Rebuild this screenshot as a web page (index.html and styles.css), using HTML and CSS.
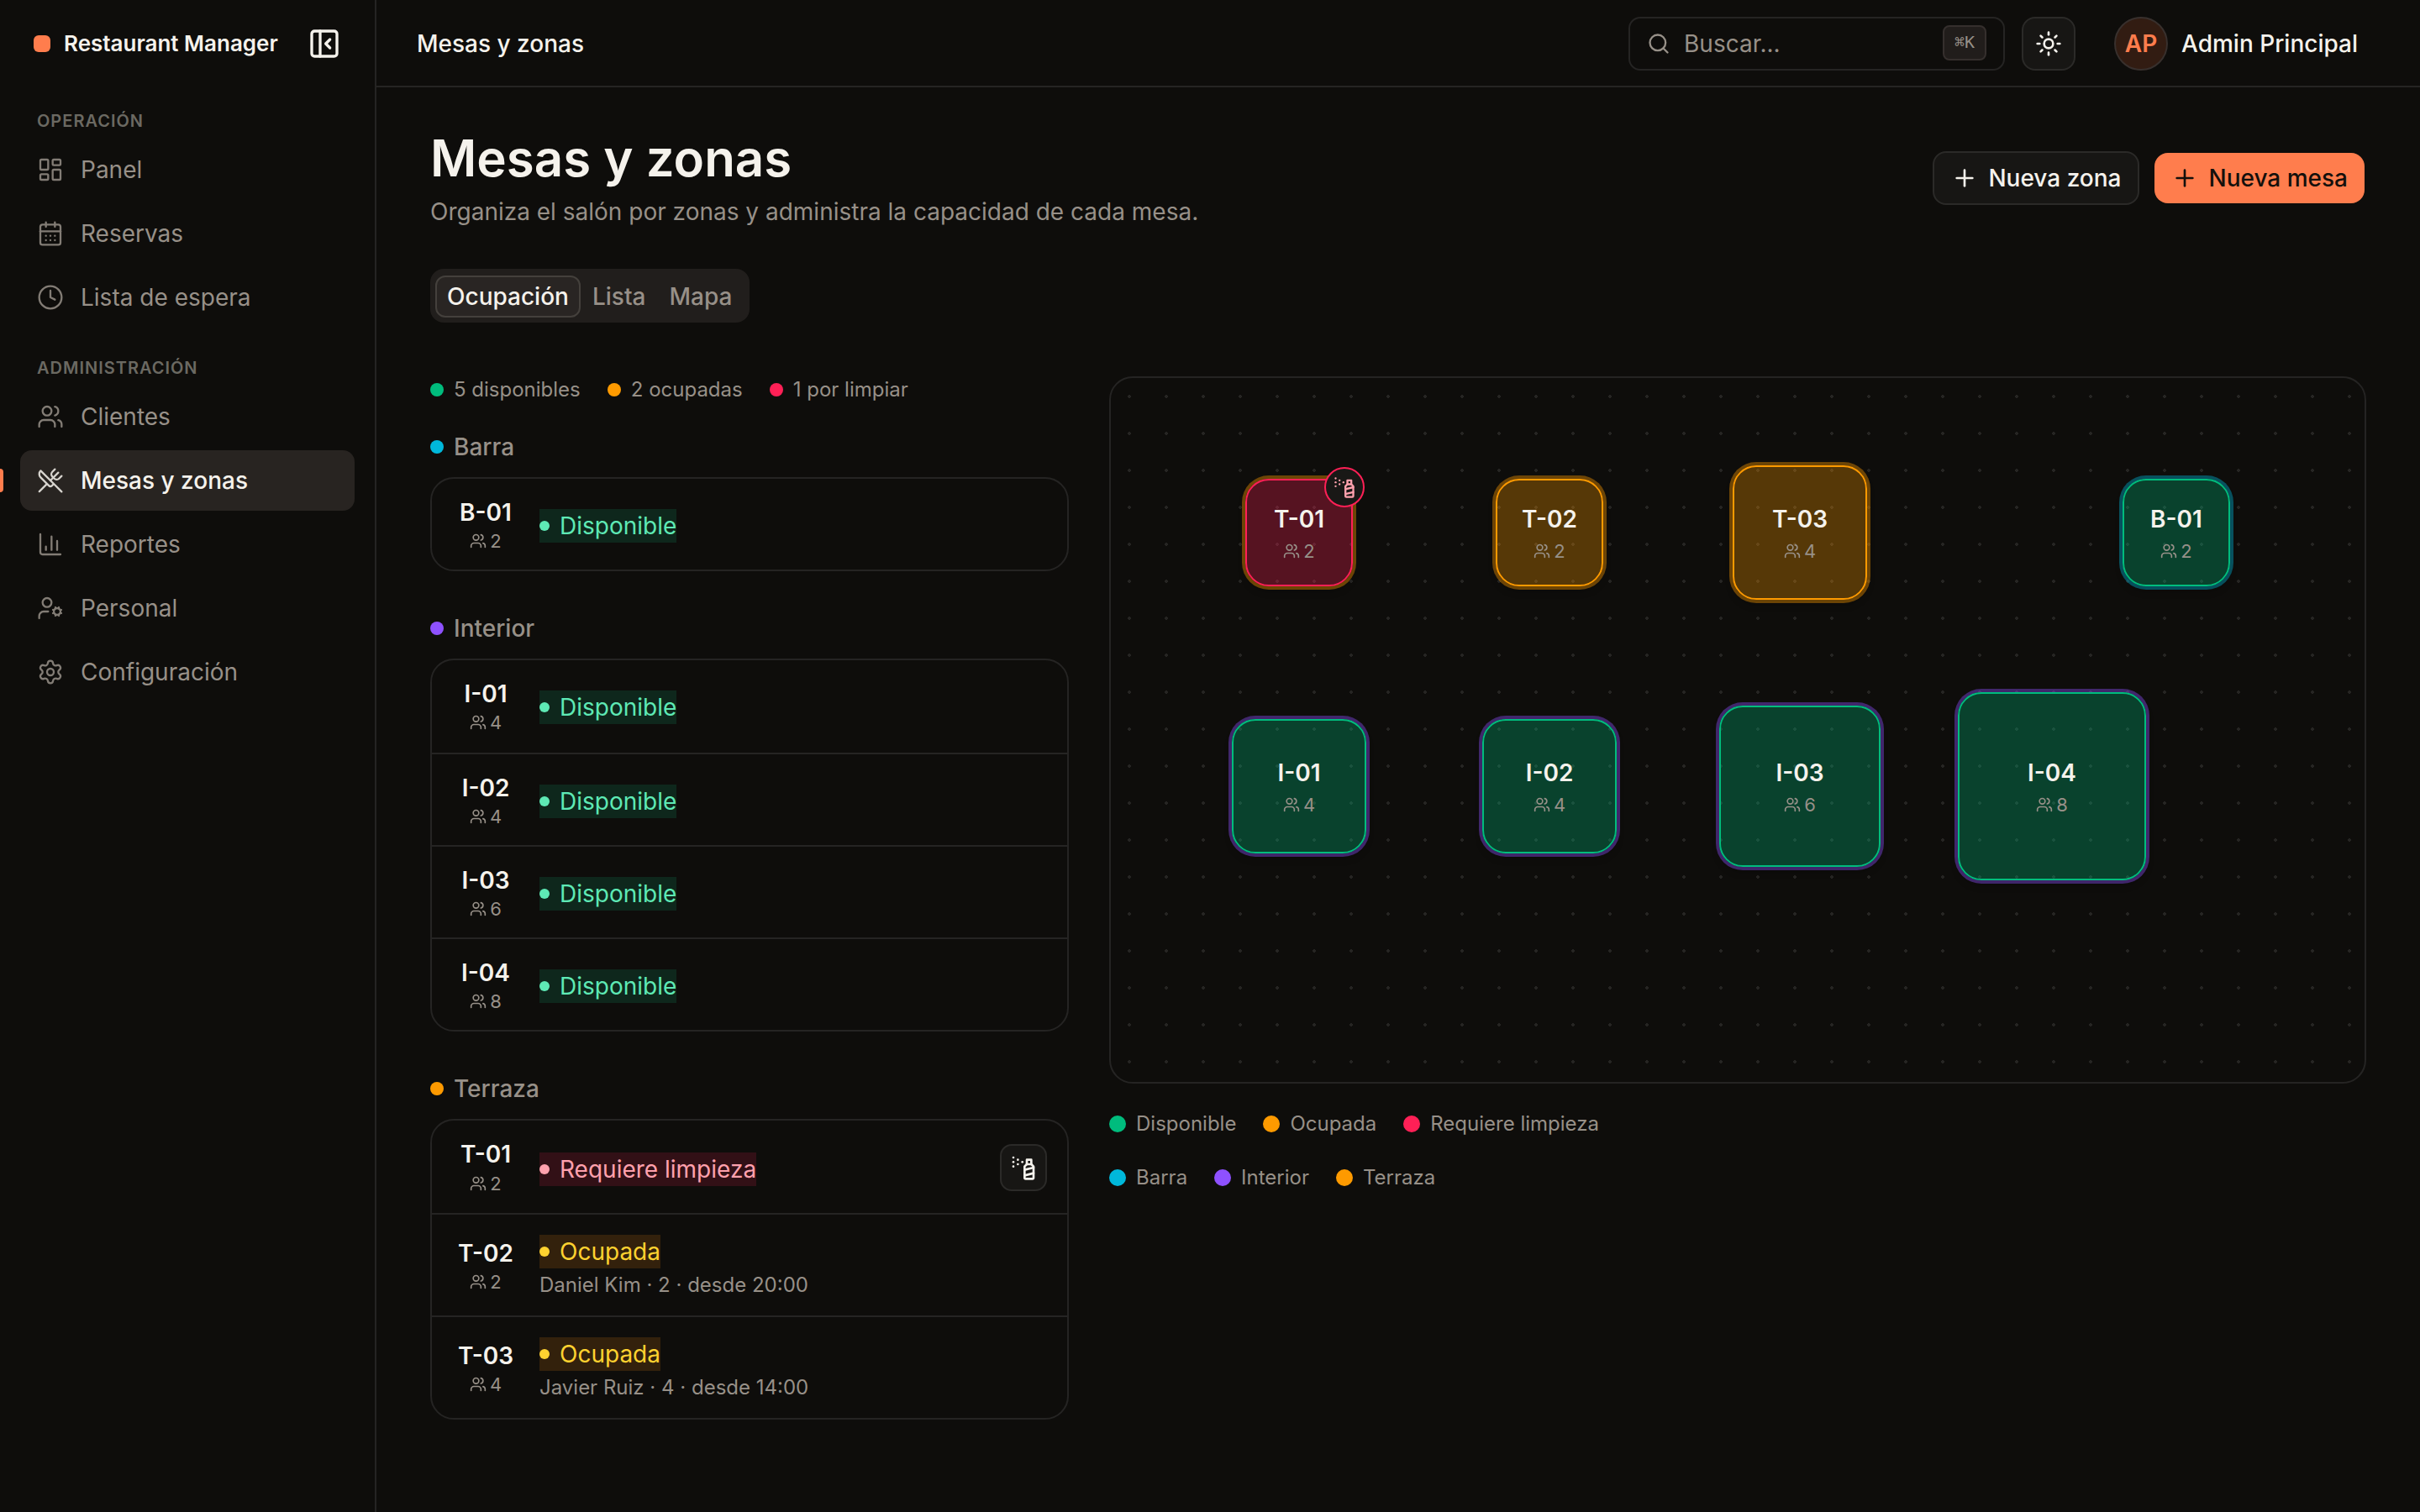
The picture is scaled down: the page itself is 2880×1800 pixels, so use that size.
FILE: index.html
```html
<!DOCTYPE html>
<html lang="es">
<head>
  <meta charset="UTF-8">
  <title>Mesas y zonas - Restaurant Manager</title>
  <link rel="stylesheet" href="styles.css">
</head>
<body>
  <!-- Iconos -->
  <svg class="sprite" aria-hidden="true">
    <symbol id="i-collapse" viewBox="0 0 24 24"><rect width="18" height="18" x="3" y="3" rx="2"/><path d="M9 3v18"/><path d="m16 15-3-3 3-3"/></symbol>
    <symbol id="i-panel" viewBox="0 0 24 24"><rect width="7" height="9" x="3" y="3" rx="1"/><rect width="7" height="5" x="14" y="3" rx="1"/><rect width="7" height="9" x="14" y="12" rx="1"/><rect width="7" height="5" x="3" y="16" rx="1"/></symbol>
    <symbol id="i-calendar" viewBox="0 0 24 24"><path d="M8 2v4"/><path d="M16 2v4"/><rect width="18" height="18" x="3" y="4" rx="2"/><path d="M3 10h18"/><path d="M8 14h.01"/><path d="M12 14h.01"/><path d="M16 14h.01"/><path d="M8 18h.01"/><path d="M12 18h.01"/><path d="M16 18h.01"/></symbol>
    <symbol id="i-clock" viewBox="0 0 24 24"><circle cx="12" cy="12" r="10"/><path d="M12 6v6l4 2"/></symbol>
    <symbol id="i-users" viewBox="0 0 24 24"><path d="M16 21v-2a4 4 0 0 0-4-4H6a4 4 0 0 0-4 4v2"/><circle cx="9" cy="7" r="4"/><path d="M22 21v-2a4 4 0 0 0-3-3.87"/><path d="M16 3.13a4 4 0 0 1 0 7.75"/></symbol>
    <symbol id="i-utensils" viewBox="0 0 24 24"><path d="m16 2-2.3 2.3a3 3 0 0 0 0 4.2l1.8 1.8a3 3 0 0 0 4.2 0L22 8"/><path d="M15 15 3.3 3.3a4.2 4.2 0 0 0 0 6l7.3 7.3c.7.7 2 .7 2.8 0L15 15Zm0 0 7 7"/><path d="m2.1 21.8 6.4-6.3"/><path d="m19 5-7 7"/></symbol>
    <symbol id="i-chart" viewBox="0 0 24 24"><path d="M3 3v16a2 2 0 0 0 2 2h16"/><path d="M13 17V5"/><path d="M18 17V9"/><path d="M8 17v-3"/></symbol>
    <symbol id="i-user-cog" viewBox="0 0 24 24"><path d="M10 15H6a4 4 0 0 0-4 4v2"/><circle cx="9" cy="7" r="4"/><circle cx="18" cy="15" r="3"/><path d="m14.305 16.53.923-.382"/><path d="m15.228 13.852-.923-.383"/><path d="m16.852 12.228-.383-.923"/><path d="m16.852 17.772-.383.924"/><path d="m19.148 12.228.383-.923"/><path d="m19.53 18.696-.382-.924"/><path d="m20.772 13.852.924-.383"/><path d="m20.772 16.148.924.383"/></symbol>
    <symbol id="i-gear" viewBox="0 0 24 24"><path d="M9.671 4.136a2.34 2.34 0 0 1 4.659 0 2.34 2.34 0 0 0 3.319 1.915 2.34 2.34 0 0 1 2.33 4.033 2.34 2.34 0 0 0 0 3.831 2.34 2.34 0 0 1-2.33 4.033 2.34 2.34 0 0 0-3.319 1.915 2.34 2.34 0 0 1-4.659 0 2.34 2.34 0 0 0-3.32-1.915 2.34 2.34 0 0 1-2.33-4.033 2.34 2.34 0 0 0 0-3.831A2.34 2.34 0 0 1 6.35 6.051a2.34 2.34 0 0 0 3.319-1.915"/><circle cx="12" cy="12" r="3"/></symbol>
    <symbol id="i-search" viewBox="0 0 24 24"><circle cx="11" cy="11" r="8"/><path d="m21 21-4.3-4.3"/></symbol>
    <symbol id="i-sun" viewBox="0 0 24 24"><circle cx="12" cy="12" r="4"/><path d="M12 2v2"/><path d="M12 20v2"/><path d="m4.93 4.93 1.41 1.41"/><path d="m17.66 17.66 1.41 1.41"/><path d="M2 12h2"/><path d="M20 12h2"/><path d="m6.34 17.66-1.41 1.41"/><path d="m19.07 4.93-1.41 1.41"/></symbol>
    <symbol id="i-plus" viewBox="0 0 24 24"><path d="M5 12h14"/><path d="M12 5v14"/></symbol>
    <symbol id="i-spray" viewBox="0 0 24 24"><path d="M3 3h.01"/><path d="M7 5h.01"/><path d="M11 7h.01"/><path d="M3 7h.01"/><path d="M7 9h.01"/><path d="M3 11h.01"/><rect width="4" height="4" x="15" y="5"/><path d="m19 9 2 2v10c0 .6-.4 1-1 1h-6c-.6 0-1-.4-1-1V11l2-2"/><path d="m13 14 8-2"/><path d="m13 19 8-2"/></symbol>
  </svg>

  <div class="app">
    <aside class="sidebar">
      <div class="brand">
        <span class="brand-mark"></span>
        <span class="brand-name">Restaurant Manager</span>
        <svg class="icon icon-lg"><use href="#i-collapse"/></svg>
      </div>
      <nav class="nav">
        <div class="nav-title">OPERACIÓN</div>
        <a class="nav-item"><svg class="icon"><use href="#i-panel"/></svg>Panel</a>
        <a class="nav-item"><svg class="icon"><use href="#i-calendar"/></svg>Reservas</a>
        <a class="nav-item"><svg class="icon"><use href="#i-clock"/></svg>Lista de espera</a>
      </nav>
      <nav class="nav">
        <div class="nav-title">ADMINISTRACIÓN</div>
        <a class="nav-item"><svg class="icon"><use href="#i-users"/></svg>Clientes</a>
        <a class="nav-item active"><svg class="icon"><use href="#i-utensils"/></svg>Mesas y zonas</a>
        <a class="nav-item"><svg class="icon"><use href="#i-chart"/></svg>Reportes</a>
        <a class="nav-item"><svg class="icon"><use href="#i-user-cog"/></svg>Personal</a>
        <a class="nav-item"><svg class="icon"><use href="#i-gear"/></svg>Configuración</a>
      </nav>
    </aside>

    <div class="main">
      <header class="topbar">
        <span class="topbar-title">Mesas y zonas</span>
        <div class="search">
          <svg class="icon icon-search"><use href="#i-search"/></svg>
          <span class="search-text">Buscar...</span>
          <kbd>⌘K</kbd>
        </div>
        <button class="theme-btn"><svg class="icon"><use href="#i-sun"/></svg></button>
        <div class="user">
          <span class="avatar">AP</span>
          <span class="user-name">Admin Principal</span>
        </div>
      </header>

      <main class="content">
        <div class="page-head">
          <div>
            <h1>Mesas y zonas</h1>
            <p class="subtitle">Organiza el salón por zonas y administra la capacidad de cada mesa.</p>
          </div>
          <div class="actions">
            <button class="btn btn-outline"><svg class="icon"><use href="#i-plus"/></svg>Nueva zona</button>
            <button class="btn btn-primary"><svg class="icon"><use href="#i-plus"/></svg>Nueva mesa</button>
          </div>
        </div>

        <div class="tabs">
          <button class="tab active">Ocupación</button>
          <button class="tab">Lista</button>
          <button class="tab">Mapa</button>
        </div>

        <div class="columns">
          <div class="list-col">
            <div class="stats">
              <span class="key"><i class="dot emerald"></i>5 disponibles</span>
              <span class="key"><i class="dot amber"></i>2 ocupadas</span>
              <span class="key"><i class="dot rose"></i>1 por limpiar</span>
            </div>

            <section class="zone">
              <h2><i class="dot cyan"></i>Barra</h2>
              <div class="card">
                <div class="row">
                  <div class="code"><b>B-01</b><small><svg class="icon"><use href="#i-users"/></svg>2</small></div>
                  <div class="info"><span class="status free">Disponible</span></div>
                </div>
              </div>
            </section>

            <section class="zone">
              <h2><i class="dot violet"></i>Interior</h2>
              <div class="card">
                <div class="row">
                  <div class="code"><b>I-01</b><small><svg class="icon"><use href="#i-users"/></svg>4</small></div>
                  <div class="info"><span class="status free">Disponible</span></div>
                </div>
                <div class="row">
                  <div class="code"><b>I-02</b><small><svg class="icon"><use href="#i-users"/></svg>4</small></div>
                  <div class="info"><span class="status free">Disponible</span></div>
                </div>
                <div class="row">
                  <div class="code"><b>I-03</b><small><svg class="icon"><use href="#i-users"/></svg>6</small></div>
                  <div class="info"><span class="status free">Disponible</span></div>
                </div>
                <div class="row">
                  <div class="code"><b>I-04</b><small><svg class="icon"><use href="#i-users"/></svg>8</small></div>
                  <div class="info"><span class="status free">Disponible</span></div>
                </div>
              </div>
            </section>

            <section class="zone">
              <h2><i class="dot amber"></i>Terraza</h2>
              <div class="card">
                <div class="row row-action">
                  <div class="code"><b>T-01</b><small><svg class="icon"><use href="#i-users"/></svg>2</small></div>
                  <div class="info"><span class="status dirty">Requiere limpieza</span></div>
                  <button class="clean-btn"><svg class="icon"><use href="#i-spray"/></svg></button>
                </div>
                <div class="row">
                  <div class="code"><b>T-02</b><small><svg class="icon"><use href="#i-users"/></svg>2</small></div>
                  <div class="info"><span class="status busy">Ocupada</span><span class="guest">Daniel Kim · 2 · desde 20:00</span></div>
                </div>
                <div class="row">
                  <div class="code"><b>T-03</b><small><svg class="icon"><use href="#i-users"/></svg>4</small></div>
                  <div class="info"><span class="status busy">Ocupada</span><span class="guest">Javier Ruiz · 4 · desde 14:00</span></div>
                </div>
              </div>
            </section>
          </div>

          <div class="map-col">
            <div class="floor">
              <div class="table size-2 dirty zone-terraza" style="left: 224px; top: 184px">
                <b>T-01</b><small><svg class="icon"><use href="#i-users"/></svg>2</small>
                <span class="badge"><svg class="icon"><use href="#i-spray"/></svg></span>
              </div>
              <div class="table size-2 busy zone-terraza" style="left: 522px; top: 184px"><b>T-02</b><small><svg class="icon"><use href="#i-users"/></svg>2</small></div>
              <div class="table size-4 busy zone-terraza" style="left: 820px; top: 184px"><b>T-03</b><small><svg class="icon"><use href="#i-users"/></svg>4</small></div>
              <div class="table size-2 free zone-barra" style="left: 1268px; top: 184px"><b>B-01</b><small><svg class="icon"><use href="#i-users"/></svg>2</small></div>
              <div class="table size-4 free zone-interior" style="left: 224px; top: 486px"><b>I-01</b><small><svg class="icon"><use href="#i-users"/></svg>4</small></div>
              <div class="table size-4 free zone-interior" style="left: 522px; top: 486px"><b>I-02</b><small><svg class="icon"><use href="#i-users"/></svg>4</small></div>
              <div class="table size-6 free zone-interior" style="left: 820px; top: 486px"><b>I-03</b><small><svg class="icon"><use href="#i-users"/></svg>6</small></div>
              <div class="table size-8 free zone-interior" style="left: 1120px; top: 486px"><b>I-04</b><small><svg class="icon"><use href="#i-users"/></svg>8</small></div>
            </div>
            <div class="legend">
              <span class="key"><i class="dot emerald"></i>Disponible</span>
              <span class="key"><i class="dot amber"></i>Ocupada</span>
              <span class="key"><i class="dot rose"></i>Requiere limpieza</span>
            </div>
            <div class="legend">
              <span class="key"><i class="dot cyan"></i>Barra</span>
              <span class="key"><i class="dot violet"></i>Interior</span>
              <span class="key"><i class="dot amber"></i>Terraza</span>
            </div>
          </div>
        </div>
      </main>
    </div>
  </div>
</body>
</html>
```
FILE: styles.css
```css
:root {
  --bg: #0e0d0b;
  --fg: #f5f2ec;
  --muted: #979088;
  --line: #252423;
  --accent: #ff7d4d;
  --emerald: #00bc7d;
  --amber: #fe9a00;
  --rose: #ff2056;
  --cyan: #00b8db;
  --violet: #8e51ff;
}
* {
  box-sizing: border-box;
}
body {
  margin: 0;
  background: var(--bg);
  color: var(--fg);
  font-family: Inter, "Liberation Sans", sans-serif;
  font-size: 28px;
  line-height: 40px;
}
h1, h2, p {
  margin: 0;
}
button {
  font: inherit;
  color: inherit;
  margin: 0;
  padding: 0;
  border: none;
  background: none;
}
.sprite {
  display: none;
}
.icon {
  width: 32px;
  height: 32px;
  flex: none;
  fill: none;
  stroke: currentColor;
  stroke-width: 2;
  stroke-linecap: round;
  stroke-linejoin: round;
}
.app {
  display: flex;
  height: 1800px;
}

/* barra lateral */
.sidebar {
  width: 448px;
  flex: none;
  border-right: 2px solid var(--line);
}
.brand {
  display: flex;
  align-items: center;
  height: 104px;
  padding: 0 40px;
}
.brand-mark {
  width: 20px;
  height: 20px;
  border-radius: 6px;
  background: var(--accent);
}
.brand-name {
  flex: 1;
  margin-left: 16px;
  font-size: 26px;
  font-weight: 600;
}
.icon-lg {
  width: 40px;
  height: 40px;
}
.nav {
  padding: 18px 24px 0;
}
.nav + .nav {
  padding-top: 22px;
}
.nav-title {
  height: 44px;
  padding: 0 20px;
  font-size: 20px;
  font-weight: 600;
  line-height: 44px;
  letter-spacing: 0.05em;
  color: #6b6962;
}
.nav-item {
  display: flex;
  align-items: center;
  gap: 20px;
  height: 72px;
  padding: 0 20px;
  margin-bottom: 4px;
  border-radius: 14px;
  color: var(--muted);
}
.nav-item .icon {
  stroke-width: 1.75;
  opacity: 0.85;
}
.nav-item.active {
  position: relative;
  background: #282421;
  color: var(--fg);
  font-weight: 500;
}
.nav-item.active::before {
  content: "";
  position: absolute;
  left: -24px;
  top: 22px;
  width: 4px;
  height: 28px;
  border-radius: 0 4px 4px 0;
  background: var(--accent);
}

/* cabecera */
.main {
  flex: 1;
}
.topbar {
  display: flex;
  align-items: center;
  height: 104px;
  padding: 2px 74px 0 48px;
  border-bottom: 2px solid var(--line);
  font-weight: 500;
}
.topbar-title {
  flex: 1;
}
.search {
  display: flex;
  align-items: center;
  width: 448px;
  height: 64px;
  padding: 0 20px;
  border: 2px solid var(--line);
  border-radius: 14px;
  color: var(--muted);
  font-weight: 400;
}
.icon-search {
  width: 28px;
  height: 28px;
}
.search-text {
  flex: 1;
  margin-left: 16px;
}
kbd {
  height: 42px;
  margin-bottom: 2px;
  padding: 0 12px;
  border: 2px solid #352f2d;
  border-radius: 8px;
  background: #211d1b;
  font-family: "DejaVu Sans Mono", monospace;
  font-size: 20px;
  line-height: 36px;
}
.theme-btn {
  display: flex;
  align-items: center;
  justify-content: center;
  width: 64px;
  height: 64px;
  margin-left: 20px;
  border: 2px solid #2b2a28;
  border-radius: 16px;
  background: #171614;
}
.user {
  display: flex;
  align-items: center;
  gap: 16px;
  margin-left: 46px;
}
.avatar {
  width: 64px;
  height: 64px;
  border: 2px solid #38302d;
  border-radius: 50%;
  background: #321c12;
  color: var(--accent);
  font-weight: 600;
  line-height: 60px;
  text-align: center;
}

/* contenido */
.content {
  padding: 48px 64px;
}
.page-head {
  display: flex;
  justify-content: space-between;
  align-items: center;
  height: 120px;
}
h1 {
  font-size: 60px;
  font-weight: 600;
  line-height: 72px;
}
.subtitle {
  margin-top: 8px;
  color: var(--muted);
}
.actions {
  display: flex;
  align-items: center;
  gap: 18px;
}
.btn {
  display: flex;
  align-items: center;
  gap: 12px;
  height: 64px;
  padding: 0 20px;
  border-radius: 16px;
  font-weight: 500;
}
.btn-outline {
  border: 2px solid #2b2a28;
  background: #171614;
}
.btn-primary {
  height: 60px;
  margin-right: 2px;
  background: var(--accent);
  color: #14100c;
}
.tabs {
  display: inline-flex;
  align-items: flex-start;
  height: 64px;
  margin-top: 48px;
  padding: 8px 7px 6px 6px;
  border-radius: 16px;
  background: #211e1c;
}
.tab {
  height: 50px;
  padding: 0 12px;
  border: 2px solid transparent;
  border-radius: 12px;
  color: var(--muted);
  font-weight: 500;
  line-height: 46px;
}
.tab.active {
  border-color: #44403c;
  background: #292523;
  color: var(--fg);
}
.columns {
  display: grid;
  grid-template-columns: 760px 1496px;
  gap: 48px;
  margin-top: 64px;
}

/* listado por zona */
.stats, .legend {
  display: flex;
  gap: 32px;
  height: 32px;
  font-size: 24px;
  line-height: 32px;
  color: var(--muted);
}
.key {
  display: flex;
  align-items: center;
  gap: 12px;
}
.dot {
  width: 16px;
  height: 16px;
  border-radius: 50%;
}
.legend .dot {
  width: 20px;
  height: 20px;
}
.emerald { background: var(--emerald); }
.amber { background: var(--amber); }
.rose { background: var(--rose); }
.cyan { background: var(--cyan); }
.violet { background: var(--violet); }
.zone {
  margin-top: 32px;
}
.zone + .zone {
  margin-top: 48px;
}
h2 {
  display: flex;
  align-items: center;
  gap: 12px;
  height: 40px;
  margin-bottom: 16px;
  font-size: 28px;
  font-weight: 500;
  color: var(--muted);
}
.card {
  border: 2px solid var(--line);
  border-radius: 28px;
}
.row {
  display: flex;
  align-items: center;
  gap: 24px;
  padding: 20px 24px;
}
.row + .row {
  border-top: 2px solid var(--line);
}
.row:first-child:not(:last-child) {
  padding-bottom: 22px;
}
.card .row-action:first-child:not(:last-child) {
  height: 110px;
  padding: 22px 24px 20px;
}
.code {
  width: 80px;
  text-align: center;
}
.code b, .table b {
  display: block;
  font-weight: 600;
}
.code small, .table small {
  display: flex;
  align-items: center;
  justify-content: center;
  gap: 4px;
  font-size: 22px;
  line-height: 28px;
  color: var(--muted);
}
.row-action .code {
  margin-top: -3px;
}
.row-action small {
  margin-top: 1px;
}
.code .icon, .table small .icon {
  width: 20px;
  height: 20px;
}
.info {
  flex: 1;
  padding-top: 4px;
}
.status {
  display: flex;
  align-items: center;
  gap: 12px;
  width: max-content;
}
.status::before {
  content: "";
  width: 12px;
  height: 12px;
  border-radius: 50%;
  background: currentColor;
}
.status.free {
  background: #0e271c;
  color: #5ee9b5;
}
.status.dirty {
  background: #321016;
  color: #ffa1ad;
}
.status.busy {
  background: #33210c;
  color: #ffd230;
}
.guest {
  display: block;
  margin-top: 4px;
  font-size: 24px;
  line-height: 32px;
  color: var(--muted);
}
.clean-btn {
  display: flex;
  align-items: center;
  justify-content: center;
  width: 56px;
  height: 56px;
  border: 2px solid #2b2a28;
  border-radius: 14px;
  background: #171614;
}

/* plano del salón */
.floor {
  position: relative;
  height: 842px;
  border: 2px solid var(--line);
  border-radius: 28px;
  background: radial-gradient(circle, #262523 2px, transparent 2px) 0 0 / 44px 44px;
  margin-bottom: 32px;
}
.legend + .legend {
  margin-top: 32px;
}
.table {
  position: absolute;
  display: flex;
  flex-direction: column;
  justify-content: center;
  transform: translate(-50%, -50%);
  border: 2px solid;
  border-radius: 28px;
  text-align: center;
}
.table small {
  margin-top: 4px;
}
.size-2 { width: 128px; height: 128px; }
.size-4 { width: 160px; height: 160px; }
.size-6 { width: 192px; height: 192px; }
.size-8 { width: 224px; height: 224px; }
.table.free {
  border-color: var(--emerald);
  background: rgba(0, 188, 125, 0.3);
}
.table.busy {
  border-color: var(--amber);
  background: rgba(254, 154, 0, 0.3);
}
.table.dirty {
  border-color: var(--rose);
  background: rgba(255, 32, 86, 0.3);
}
.zone-terraza { box-shadow: 0 0 0 4px rgba(254, 154, 0, 0.4), 0 6px 8px rgba(0, 0, 0, 0.25); }
.zone-barra { box-shadow: 0 0 0 4px rgba(0, 184, 219, 0.4), 0 6px 8px rgba(0, 0, 0, 0.25); }
.zone-interior { box-shadow: 0 0 0 4px rgba(142, 81, 255, 0.4), 0 6px 8px rgba(0, 0, 0, 0.25); }
.badge {
  position: absolute;
  top: -16px;
  right: -16px;
  display: flex;
  align-items: center;
  justify-content: center;
  width: 48px;
  height: 48px;
  border: 2px solid var(--rose);
  border-radius: 50%;
  background: #191816;
  color: #ffa1ad;
}
.badge .icon {
  width: 28px;
  height: 28px;
}
```
